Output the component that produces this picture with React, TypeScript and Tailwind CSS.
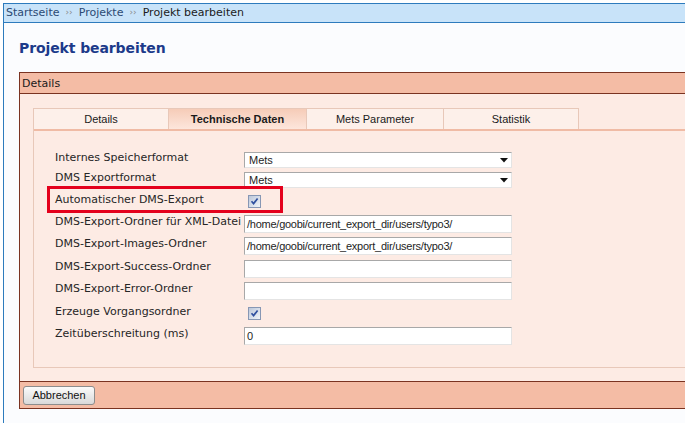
import { type ReactNode } from 'react';

const verdana = "font-['DejaVu_Sans',sans-serif]";
const tahoma = "font-['Liberation_Sans',Arial,sans-serif]";

function Checkbox() {
    return (
        <span className="ml-[4px] flex h-[13px] w-[13px] items-center justify-center border border-[#8797b4] bg-gradient-to-br from-[#bcc7da] to-[#f1f4f8]">
            <svg width="9" height="9" viewBox="0 0 9 9">
                <path d="M1.5 4.2 L3.6 6.6 L7.6 1.4" stroke="#2f4f9f" strokeWidth="1.7" fill="none" />
            </svg>
        </span>
    );
}

function Select({ value }: { value: string }) {
    return (
        <div className={`flex h-[16px] w-[268px] items-center border border-t-[#a8a8a8] border-l-[#a8a8a8] border-r-[#e4e4e4] border-b-[#e4e4e4] bg-white pl-[4px] pr-[3px] text-[11px] text-[#1e1e1e] ${tahoma}`}>
            <span className="pt-[1px]">{value}</span>
            <svg className="ml-auto" width="8" height="5" viewBox="0 0 8 5">
                <path d="M0 0 H8 L4 4.5 Z" fill="#111" />
            </svg>
        </div>
    );
}

function Input({ value = '' }: { value?: string }) {
    return (
        <div className={`flex h-[18px] w-[268px] items-center border border-t-[#a8a8a8] border-l-[#a8a8a8] border-r-[#e4e4e4] border-b-[#e4e4e4] bg-white pl-[2px] text-[11px] tracking-[-0.25px] text-[#1e1e1e] ${tahoma}`}>
            {value}
        </div>
    );
}

function Row({ label, h, children }: { label: string; h: string; children: ReactNode }) {
    return (
        <div className={`flex items-center ${h}`}>
            <span className={`w-[189px] shrink-0 whitespace-nowrap pb-[3px] text-[11px] text-[#262626] ${verdana}`}>{label}</span>
            {children}
        </div>
    );
}

const tabs = [
    { name: 'Details', w: 'w-[135px]' },
    { name: 'Technische Daten', w: 'w-[138px]', active: true },
    { name: 'Mets Parameter', w: 'w-[137px]' },
    { name: 'Statistik', w: 'w-[135px]' },
];

const exportDir = '/home/goobi/current_export_dir/users/typo3/';

export default function App() {
    return (
        <div className="h-[423px] w-[685px] overflow-hidden bg-white pl-[3px] pt-[3px]">
            <div className="h-[420px] w-[760px] border-l border-[#2d7bbd] bg-[#fbfcfe]">
                <div className={`flex h-[20px] items-center gap-[6px] border-y border-[#2d7bbd] bg-[#c8e3f9] pl-[2px] text-[11px] ${verdana}`}>
                    <span className="text-[#2c4a74]">Startseite</span>
                    <span className="text-[9px] text-[#8a8a8a]">››</span>
                    <span className="text-[#2c4a74]">Projekte</span>
                    <span className="text-[9px] text-[#8a8a8a]">››</span>
                    <span className="text-[#1c1c1c]">Projekt bearbeiten</span>
                </div>

                <div className="pl-[15px] pt-[15px]">
                    <h1 className={`h-[20px] text-[14px] leading-[20px] font-bold tracking-[-0.1px] text-[#1c3a8a] ${verdana}`}>
                        Projekt bearbeiten
                    </h1>

                    <div className="mt-[14px] border border-[#7a3321] bg-[#fdebe4]">
                        <div className={`flex h-[21px] items-center border-b border-[#7a3321] bg-[#f4bca5] pl-[2px] pt-[2px] text-[11px] text-[#1a1a1a] ${verdana}`}>
                            Details
                        </div>

                        <div className="pb-[13px] pl-[13px] pt-[14px]">
                            <div className="border-b border-l border-[#e8c8b9]">
                                <div className="flex h-[21px]">
                                    {tabs.map((t) => (
                                        <div
                                            key={t.name}
                                            className={`flex items-center justify-center border-r border-t border-[#e8c8b9] text-[11px] text-[#1a1a1a] ${tahoma} ${t.w} ${
                                                t.active
                                                    ? 'bg-gradient-to-b from-[#f6ccb8] to-[#fde6dc] font-bold'
                                                    : 'bg-[#fdf0ea]'
                                            }`}
                                        >
                                            {t.name}
                                        </div>
                                    ))}
                                </div>
                                <div className="h-[2px] bg-[#f0bba5]" />

                                <div className="relative pb-[20px] pl-[21px] pt-[19px]">
                                    <Row label="Internes Speicherformat" h="h-[20px]">
                                        <Select value="Mets" />
                                    </Row>
                                    <Row label="DMS Exportformat" h="h-[20px]">
                                        <Select value="Mets" />
                                    </Row>
                                    <Row label="Automatischer DMS-Export" h="h-[23px]">
                                        <Checkbox />
                                    </Row>
                                    <Row label="DMS-Export-Ordner für XML-Datei" h="h-[22px]">
                                        <Input value={exportDir} />
                                    </Row>
                                    <Row label="DMS-Export-Images-Ordner" h="h-[22px]">
                                        <Input value={exportDir} />
                                    </Row>
                                    <Row label="DMS-Export-Success-Ordner" h="h-[23px]">
                                        <Input />
                                    </Row>
                                    <Row label="DMS-Export-Error-Ordner" h="h-[22px]">
                                        <Input />
                                    </Row>
                                    <Row label="Erzeuge Vorgangsordner" h="h-[23px]">
                                        <Checkbox />
                                    </Row>
                                    <Row label="Zeitüberschreitung (ms)" h="h-[22px]">
                                        <Input value="0" />
                                    </Row>

                                    <div className="absolute left-[13px] top-[55px] h-[27px] w-[236px] border-[3px] border-[#e4001c]" />
                                </div>
                            </div>
                        </div>

                        <div className="flex h-[27px] items-center border-t border-[#7a3321] bg-[#f4bca5] pl-[3px]">
                            <button
                                className={`h-[19px] w-[72px] rounded-[3px] border border-[#8c8c8c] bg-gradient-to-b from-[#fbfbfb] to-[#d9d9d9] text-[11px] text-[#111] ${tahoma}`}
                            >
                                Abbrechen
                            </button>
                        </div>
                    </div>
                </div>
            </div>
        </div>
    );
}
